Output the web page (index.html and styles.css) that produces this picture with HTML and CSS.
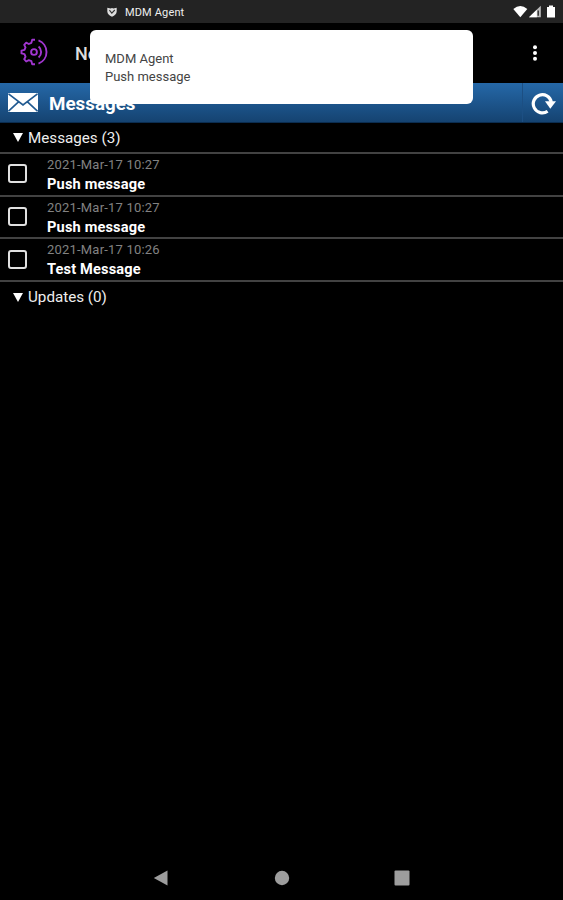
FILE: index.html
```html
<!DOCTYPE html>
<html lang="en">
<head>
    <meta charset="UTF-8">
    <meta name="viewport" content="width=device-width, initial-scale=1.0">
    <title>MDM Agent</title>
    <link rel="stylesheet" href="styles.css">
</head>
<body>
    <div class="screen">
        <div class="statusbar">
            <svg class="shield" width="10" height="10" viewBox="0 0 10 10">
                <path d="M0.3 0.8 L3.6 1.5 L5 1 L6.4 1.5 L9.7 0.8 V4.5 Q9.4 8 5 9.8 Q0.6 8 0.3 4.5 Z" fill="#ddd"/>
                <path d="M2.4 3.2 L4.8 6.2 L7.8 3" fill="none" stroke="#333" stroke-width="1.1"/>
            </svg>
            <span class="status-app">MDM Agent</span>
            <svg class="status-icons" width="43" height="14" viewBox="0 0 43 14">
                <path d="M0.3 4 Q7.3 -1.8 14.3 4 L7.3 12.2 Z" fill="#fff"/>
                <path d="M16 12.2 L27.8 0.8 V12.2 Z" fill="#bbb"/>
                <path d="M16 12.2 L23.8 4.7 V12.2 Z" fill="#fff"/>
                <path d="M25.2 5.5 V10.8" stroke="#222" stroke-width="1.3"/>
                <path d="M34 2 H36 V0.5 H40 V2 H42 V12.5 H34 Z" fill="#fff"/>
            </svg>
        </div>
        <div class="appbar">
            <svg class="gear" width="28" height="28" viewBox="0 0 28 28" fill="none" stroke="#a136cf" stroke-width="1.9" stroke-linejoin="round">
                <path d="M15 1.8 H12.2 L11.4 4.8 L8.8 6 L6.2 4.6 L4.2 6.8 L5.5 9.4 L4.5 11.8 L1.5 12.6 V15.4 L4.5 16.2 L5.5 18.7 L4.2 21.2 L6.2 23.5 L8.8 22.1 L11.4 23.2 L12.2 26.2 H15"/>
                <path d="M18.5 2.4 A12.4 12.4 0 0 1 18.5 25.6"/>
                <circle cx="14" cy="14" r="2.9"/>
                <path d="M18.6 8.6 A7 7 0 0 1 18.6 19.4"/>
            </svg>
            <span class="appbar-title">No</span>
            <svg class="dots" width="6" height="18" viewBox="0 0 6 18" fill="#fff">
                <circle cx="3" cy="3.3" r="2"/>
                <circle cx="3" cy="9" r="2"/>
                <circle cx="3" cy="14.7" r="2"/>
            </svg>
        </div>
        <div class="section-bar">
            <svg class="envelope" width="30" height="19" viewBox="0 0 30 19">
                <rect width="30" height="19" rx="1" fill="#fff"/>
                <path d="M0.5 0.8 L15 12 L29.5 0.8 M0.5 18.2 L10.5 8.8 M29.5 18.2 L19.5 8.8" fill="none" stroke="#215a91" stroke-width="1.7"/>
            </svg>
            <h1>Messages</h1>
            <div class="refresh">
                <svg width="26" height="24" viewBox="0 0 26 24">
                    <path d="M16.6 20.2 A9.1 9.1 0 1 1 20.3 11" fill="none" stroke="#fff" stroke-width="3.2"/>
                    <path d="M14 10.3 H25 L19.3 17.8 Z" fill="#fff"/>
                </svg>
            </div>
        </div>
        <div class="group"><span class="arrow"></span>Messages (3)</div>
        <div class="message">
            <span class="checkbox"></span>
            <div>
                <div class="date">2021-Mar-17 10:27</div>
                <div class="subject">Push message</div>
            </div>
        </div>
        <div class="message">
            <span class="checkbox"></span>
            <div>
                <div class="date">2021-Mar-17 10:27</div>
                <div class="subject">Push message</div>
            </div>
        </div>
        <div class="message">
            <span class="checkbox"></span>
            <div>
                <div class="date">2021-Mar-17 10:26</div>
                <div class="subject">Test Message</div>
            </div>
        </div>
        <div class="group last"><span class="arrow"></span>Updates (0)</div>
        <div class="navbar">
            <svg width="16" height="16" viewBox="0 0 16 16"><path d="M0.8 8 L14.5 0.5 V15.5 Z" fill="#9d9d9d"/></svg>
            <svg width="16" height="16" viewBox="0 0 16 16"><circle cx="8" cy="8" r="7.2" fill="#9d9d9d"/></svg>
            <svg width="16" height="16" viewBox="0 0 16 16"><rect x="0.5" y="0.5" width="15" height="15" rx="1" fill="#9d9d9d"/></svg>
        </div>
        <div class="toast">
            <div>MDM Agent</div>
            <div>Push message</div>
        </div>
    </div>
</body>
</html>
```
FILE: styles.css
```css
* {
    box-sizing: border-box;
}
body {
    margin: 0;
    background-color: #000;
    color: #fff;
    font-family: Roboto, "Liberation Sans", sans-serif;
}
svg {
    display: block;
    flex-shrink: 0;
}
.screen {
    position: relative;
    display: flex;
    flex-direction: column;
    width: 563px;
    height: 900px;
    overflow: hidden;
}
.statusbar {
    display: flex;
    align-items: center;
    height: 23px;
    padding: 1px 7px 0 107px;
    background-color: #232323;
}
.status-app {
    margin-left: 8px;
    font-size: 11px;
    letter-spacing: 0.15px;
    color: #eee;
}
.status-icons {
    margin-left: auto;
}
.appbar {
    display: flex;
    align-items: center;
    height: 60px;
    padding: 0 25px 0 20px;
}
.gear {
    margin-top: -2px;
}
.appbar-title {
    margin-left: 27px;
    font-size: 18px;
    font-weight: 500;
    color: #ddd;
}
.dots {
    margin-left: auto;
}
.section-bar {
    display: flex;
    align-items: center;
    height: 40px;
    padding-left: 8px;
    background: linear-gradient(#2568a8, #154371);
    border-bottom: 1px solid #0b2d50;
}
.section-bar h1 {
    margin: 2px 0 0 11px;
    font-size: 18.8px;
    font-weight: 700;
}
.refresh {
    display: flex;
    align-items: center;
    align-self: stretch;
    width: 41px;
    margin-left: auto;
    padding-left: 8px;
    border-left: 1px solid #1c4f83;
}
.group {
    display: flex;
    align-items: center;
    height: 29px;
    padding-left: 13px;
    font-size: 15.2px;
    color: #eee;
}
.arrow {
    width: 10px;
    margin-right: 5px;
    border: 5px solid transparent;
    border-top: 9px solid #fff;
    border-bottom: 0;
}
.message {
    display: flex;
    align-items: center;
    height: 42.7px;
    padding-left: 8px;
    border-top: 2px solid #424242;
}
.checkbox {
    width: 19px;
    height: 19px;
    margin: -1px 20px 0 0;
    border: 2px solid #e0e0e0;
    border-radius: 3px;
}
.date {
    font-size: 13px;
    line-height: 19px;
    letter-spacing: 0.2px;
    color: #828282;
}
.subject {
    font-size: 14.6px;
    font-weight: 700;
    line-height: 20px;
    letter-spacing: 0.15px;
}
.last {
    height: 32px;
    border-top: 2px solid #424242;
}
.navbar {
    display: flex;
    justify-content: space-between;
    margin-top: auto;
    padding: 0 153px 14px;
}
.toast {
    position: absolute;
    top: 30px;
    left: 90px;
    width: 383px;
    height: 74px;
    padding: 20px 15px;
    border-radius: 6px;
    background-color: #fff;
    color: #444;
    font-size: 13px;
    line-height: 18px;
}
```
